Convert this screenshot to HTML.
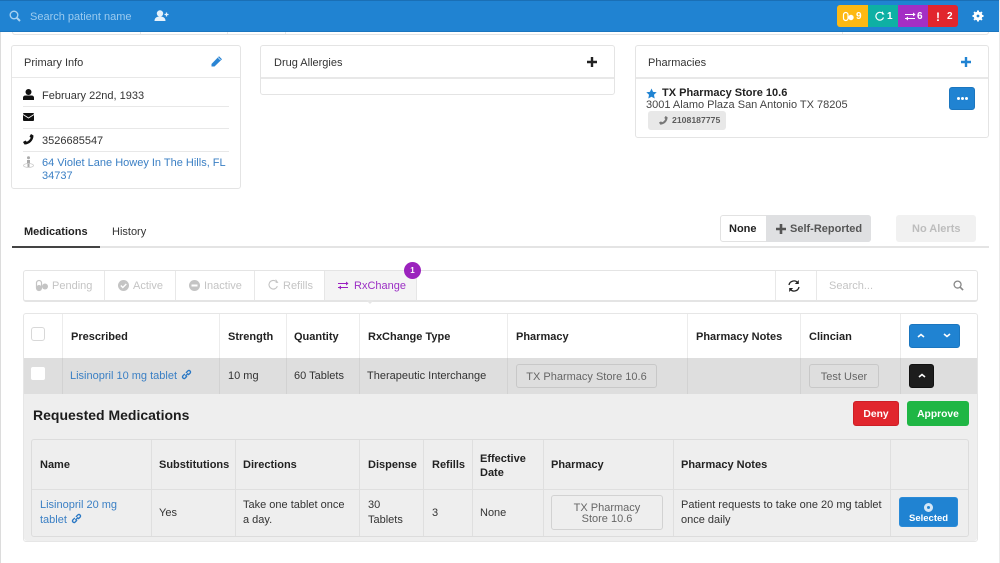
<!DOCTYPE html>
<html><head><meta charset="utf-8">
<style>
*{box-sizing:border-box}
html,body{margin:0;padding:0;width:1000px;height:563px;overflow:hidden;background:#fff;font-family:"Liberation Sans",sans-serif;font-size:11px;color:#333}
.a{position:absolute;white-space:nowrap;margin-top:1px}
.b{position:absolute}
.card{position:absolute;border:1px solid #e4e4e4;border-radius:3px;background:#fff}
.line{position:absolute;background:#e8e8e8}
.th{position:absolute;font-weight:bold;color:#222;white-space:nowrap;font-size:11px;margin-top:1px}
.link{color:#3a7fc4}
svg{position:absolute;overflow:visible}
.btn{position:absolute;border-radius:3px;text-align:center;white-space:nowrap}
.tabt{position:absolute;color:#c4c4c4;font-size:11px;white-space:nowrap;margin-top:1px}
.dg{font-size:10px!important}
</style></head><body>

<div class="b" style="left:0;top:0;width:1px;height:563px;background:#dcdcdc"></div>
<div class="b" style="left:999px;top:0;width:1px;height:563px;background:#eaeaea;z-index:5"></div>

<!-- remnant card top -->
<div class="b" style="left:12px;top:31px;width:977px;height:4px;border:1px solid #e4e4e4;border-top:0;border-radius:0 0 3px 3px"></div>
<div class="line" style="left:140px;top:31px;width:1px;height:3px"></div>
<div class="line" style="left:227px;top:31px;width:1px;height:3px"></div>
<div class="line" style="left:285px;top:31px;width:1px;height:3px"></div>
<div class="line" style="left:842px;top:31px;width:1px;height:3px"></div>

<!-- top bar -->
<div class="b" style="left:0;top:0;width:1000px;height:32px;background:#2083d2;border-top:1px solid #1a6fb5;border-bottom:1px solid #1b76bf"></div>
<svg style="left:9px;top:10px" width="12" height="12" viewBox="0 0 12 12"><circle cx="5" cy="5" r="3.8" fill="none" stroke="#a9d2f1" stroke-width="1.400"/><path d="M7.800 7.800L11 11" stroke="#a9d2f1" stroke-width="2"/></svg>
<div class="a" style="left:30px;top:10px;color:#9ccbef;font-size:11px">Search patient name</div>
<svg style="left:154px;top:10px" width="15" height="12" viewBox="0 0 15 12"><circle cx="6" cy="3.500" r="3.200" fill="#e6f2fb"/><path d="M0.500 11c0-3 2-4.500 5.500-4.500s5.500 1.500 5.500 4.500z" fill="#e6f2fb"/><path d="M12.500 2.500v4M10.500 4.500h4" stroke="#e6f2fb" stroke-width="1.300"/></svg>

<!-- badges -->
<div class="b" style="left:837px;top:5px;width:31px;height:22px;background:#fdb913;border-radius:3px 0 0 3px"></div>
<div class="b" style="left:868px;top:5px;width:30px;height:22px;background:#0eb0a4"></div>
<div class="b" style="left:898px;top:5px;width:30px;height:22px;background:#a42fc4"></div>
<div class="b" style="left:928px;top:5px;width:30px;height:22px;background:#e1262d;border-radius:0 3px 3px 0"></div>
<svg style="left:843px;top:12px" width="11" height="9" viewBox="0 0 11 9"><rect x="0.500" y="0.500" width="4.500" height="8" rx="2.200" fill="none" stroke="#fff" stroke-width="1.200"/><circle cx="8" cy="5.500" r="2.700" fill="#fff"/></svg>
<div class="a dg" style="left:856px;top:10px;color:#fff;font-weight:bold">9</div>
<svg style="left:875px;top:11px" width="10" height="10" viewBox="0 0 10 10"><path d="M8.500 6.500A3.900 3.900 0 1 1 7 2" fill="none" stroke="#fff" stroke-width="1.200"/><path d="M7 0v3.500H9.500z" fill="#fff"/></svg>
<div class="a dg" style="left:887px;top:10px;color:#fff;font-weight:bold">1</div>
<svg style="left:905px;top:12px" width="11" height="9" viewBox="0 0 11 9"><path d="M0 2.500h9M0 6.500h10" stroke="#fff" stroke-width="1.100"/><path d="M8 0.500l2.500 2-2.500 2zM3 4.500l-2.500 2 2.500 2z" fill="#fff"/></svg>
<div class="a dg" style="left:917px;top:10px;color:#fff;font-weight:bold">6</div>
<div class="a" style="left:936px;top:9px;color:#fff;font-weight:bold;font-size:12px">!</div>
<div class="a dg" style="left:947px;top:10px;color:#fff;font-weight:bold">2</div>
<svg style="left:972px;top:10px" width="12" height="12" viewBox="0 0 12 12"><circle cx="6" cy="6" r="2.900" fill="none" stroke="#fff" stroke-width="3"/><path d="M6 .5v2.500M6 9v2.500M.5 6H3M9 6h2.500M2.100 2.100l1.800 1.800M8.100 8.100l1.800 1.800M9.900 2.100L8.100 3.900M3.900 8.100L2.100 9.900" stroke="#fff" stroke-width="2"/></svg>

<!-- Primary Info -->
<div class="card" style="left:11px;top:45px;width:230px;height:144px"></div>
<div class="line" style="left:12px;top:77px;width:228px;height:1px"></div>
<div class="a" style="left:24px;top:56px;font-size:11px;color:#333">Primary Info</div>
<svg style="left:211px;top:55px" width="12" height="12" viewBox="0 0 12 12"><path d="M.5 9L8 1.300 11 4.200 3.500 11.500H.5z" fill="#2a85d4"/><path d="M7 2.500l2.500 2.500" stroke="#fff" stroke-width=".6"/></svg>
<svg style="left:23px;top:89px" width="11" height="11" viewBox="0 0 11 11"><circle cx="5.500" cy="3" r="3" fill="#111"/><path d="M0 11V8.500C0 7.500 1 6.500 2.500 6.500h6c1.500 0 2.500 1 2.500 2V11z" fill="#111"/></svg>
<div class="a" style="left:42px;top:89px;font-size:11px;color:#333">February 22nd, 1933</div>
<div class="line" style="left:23px;top:106px;width:206px;height:1px"></div>
<svg style="left:23px;top:113px" width="11" height="8" viewBox="0 0 11 8"><rect width="11" height="8" rx="1" fill="#111"/><path d="M0 1.500L5.500 5 11 1.500" fill="none" stroke="#fff" stroke-width=".9"/></svg>
<div class="line" style="left:23px;top:128px;width:206px;height:1px"></div>
<svg style="left:23px;top:134px" width="11" height="11" viewBox="0 0 11 11"><path d="M10.500 1.500c0 5-4 9-9 9L0 8l2.500-1.500 1.200 1.200C5.500 7 7 5.500 7.700 3.700L6.500 2.500 8 0z" fill="#111"/></svg>
<div class="a" style="left:42px;top:134px;font-size:11px;color:#333">3526685547</div>
<div class="line" style="left:23px;top:151px;width:206px;height:1px"></div>
<svg style="left:23px;top:156px" width="11" height="12" viewBox="0 0 11 12"><circle cx="5.500" cy="1.800" r="1.500" fill="#aaa"/><path d="M4 4h3v4H6.500v3h-2V8H4z" fill="#aaa"/><ellipse cx="5.500" cy="9.500" rx="5" ry="2" fill="none" stroke="#ccc" stroke-width=".8"/></svg>
<div class="a link" style="left:42px;top:156px;font-size:11px;line-height:13px;white-space:normal;width:190px">64 Violet Lane Howey In The Hills, FL 34737</div>

<!-- Drug Allergies -->
<div class="card" style="left:260px;top:45px;width:355px;height:50px"></div>
<div class="line" style="left:261px;top:77px;width:353px;height:2px"></div>
<div class="a" style="left:274px;top:56px;font-size:11px;color:#333">Drug Allergies</div>
<svg style="left:587px;top:57px" width="10" height="10" viewBox="0 0 10 10"><path d="M5 0v10M0 5h10" stroke="#222" stroke-width="2.400"/></svg>

<!-- Pharmacies -->
<div class="card" style="left:635px;top:45px;width:354px;height:93px"></div>
<div class="line" style="left:636px;top:77px;width:352px;height:2px"></div>
<div class="a" style="left:648px;top:56px;font-size:11px;color:#333">Pharmacies</div>
<svg style="left:961px;top:57px" width="10" height="10" viewBox="0 0 10 10"><path d="M5 0v10M0 5h10" stroke="#2083d2" stroke-width="2.400"/></svg>
<svg style="left:646px;top:88px" width="11" height="11" viewBox="0 0 12 12"><path d="M6 .5l1.700 3.700 4 .5-3 2.700.8 4L6 9.500l-3.500 1.900.8-4-3-2.700 4-.5z" fill="#2083d2"/></svg>
<div class="a" style="left:662px;top:86px;font-size:11px;font-weight:bold;color:#222">TX Pharmacy Store 10.6</div>
<div class="a" style="left:646px;top:98px;font-size:11px;color:#444">3001 Alamo Plaza San Antonio TX 78205</div>
<div class="b" style="left:648px;top:111px;width:78px;height:19px;background:#e8e8e8;border-radius:3px"></div>
<svg style="left:659px;top:116px" width="9" height="9" viewBox="0 0 11 11"><path d="M10.500 1.500c0 5-4 9-9 9L0 8l2.500-1.500 1.200 1.200C5.500 7 7 5.500 7.700 3.700L6.500 2.500 8 0z" fill="#777"/></svg>
<div class="a" style="left:672px;top:114px;font-size:8.700px;color:#444;font-weight:bold;opacity:.85">2108187775</div>
<div class="btn" style="left:949px;top:87px;width:26px;height:23px;background:#2083d2;border:1px solid #1b76bf"></div>
<div class="b" style="left:957px;top:97px;width:3px;height:3px;background:#fff;border-radius:50%;box-shadow:4px 0 0 #fff,8px 0 0 #fff"></div>

<!-- Tabs -->
<div class="a" style="left:24px;top:225px;font-size:11px;font-weight:bold;color:#222">Medications</div>
<div class="a" style="left:112px;top:225px;font-size:11px;color:#333">History</div>
<div class="line" style="left:12px;top:246px;width:977px;height:2px;background:#e4e4e4"></div>
<div class="b" style="left:12px;top:246px;width:88px;height:2px;background:#444"></div>

<div class="b" style="left:720px;top:215px;width:151px;height:27px;border:1px solid #e2e2e2;border-radius:3px;background:#fff"></div>
<div class="b" style="left:766px;top:215px;width:105px;height:27px;background:#dfe0e2;border-radius:0 3px 3px 0"></div>
<div class="a" style="left:729px;top:222px;font-size:11px;font-weight:bold;color:#222">None</div>
<svg style="left:776px;top:224px" width="10" height="10" viewBox="0 0 10 10"><path d="M5 0v10M0 5h10" stroke="#555" stroke-width="2.600"/></svg>
<div class="a" style="left:790px;top:222px;font-size:11px;font-weight:bold;color:#555">Self-Reported</div>
<div class="b" style="left:896px;top:215px;width:80px;height:27px;background:#f1f1f1;border-radius:3px"></div>
<div class="a" style="left:912px;top:222px;font-size:11px;font-weight:bold;color:#bdbdbd">No Alerts</div>

<!-- Filter bar -->
<div class="card" style="left:23px;top:270px;width:955px;height:32px;border:1px solid #e4e4e4;border-bottom-width:2px"></div>
<div class="line" style="left:104px;top:271px;width:1px;height:29px"></div>
<div class="line" style="left:175px;top:271px;width:1px;height:29px"></div>
<div class="line" style="left:254px;top:271px;width:1px;height:29px"></div>
<div class="b" style="left:324px;top:271px;width:93px;height:29px;background:#f4f4f4;border-left:1px solid #e6e6e6;border-right:1px solid #e6e6e6"></div>
<div class="b" style="left:366px;top:300px;width:0;height:0;border:4px solid transparent;border-top:4px solid #e6e6e6"></div>
<div class="line" style="left:775px;top:271px;width:1px;height:29px"></div>
<div class="line" style="left:816px;top:271px;width:1px;height:29px"></div>

<svg style="left:36px;top:280px" width="12" height="11" viewBox="0 0 12 11"><rect x="0.500" y="0.500" width="5" height="10" rx="2.500" fill="none" stroke="#c4c4c4" stroke-width="1.200"/><rect x="0.500" y="5" width="5" height="5.500" rx="2.500" fill="#c4c4c4"/><circle cx="9" cy="6.500" r="3" fill="#c4c4c4"/></svg>
<div class="tabt" style="left:52px;top:279px">Pending</div>
<svg style="left:118px;top:280px" width="11" height="11" viewBox="0 0 11 11"><circle cx="5.500" cy="5.500" r="5.500" fill="#c4c4c4"/><path d="M2.800 5.500l2 2 3.500-3.500" fill="none" stroke="#fff" stroke-width="1.400"/></svg>
<div class="tabt" style="left:133px;top:279px">Active</div>
<svg style="left:189px;top:280px" width="11" height="11" viewBox="0 0 11 11"><circle cx="5.500" cy="5.500" r="5.500" fill="#c4c4c4"/><rect x="2.500" y="4.500" width="6" height="2" fill="#fff"/></svg>
<div class="tabt" style="left:204px;top:279px">Inactive</div>
<svg style="left:268px;top:279px" width="11" height="11" viewBox="0 0 10 10"><path d="M8.500 6.500A3.900 3.900 0 1 1 7 2" fill="none" stroke="#c4c4c4" stroke-width="1"/><path d="M7 0v3.500H9.500z" fill="#c4c4c4"/></svg>
<div class="tabt" style="left:283px;top:279px">Refills</div>
<svg style="left:338px;top:281px" width="11" height="9" viewBox="0 0 11 9"><path d="M0 2.500h9M0 6.500h10" stroke="#9b1fc0" stroke-width="1"/><path d="M8 0.500l2.500 2-2.500 2zM3 4.500l-2.500 2 2.500 2z" fill="#9b1fc0"/></svg>
<div class="a" style="left:354px;top:279px;font-size:11px;color:#9b2fc4">RxChange</div>
<div class="b" style="left:404px;top:262px;width:17px;height:17px;border-radius:50%;background:#9b23bd;color:#fff;font-size:8px;font-weight:bold;text-align:center;line-height:17px">1</div>
<svg style="left:788px;top:280px" width="12" height="12" viewBox="0 0 12 12"><path d="M1 5a5 5 0 0 1 8.800-2.200M11 7a5 5 0 0 1-8.800 2.200" fill="none" stroke="#222" stroke-width="1.300"/><path d="M10.800 0v4h-4zM1.200 12V8h4z" fill="#222"/></svg>
<div class="a" style="left:829px;top:279px;font-size:11px;color:#c4c4c4">Search...</div>
<svg style="left:953px;top:280px" width="11" height="11" viewBox="0 0 12 12"><circle cx="5" cy="5" r="3.800" fill="none" stroke="#888" stroke-width="1.400"/><path d="M7.800 7.800L11 11" stroke="#888" stroke-width="1.800"/></svg>

<!-- Main table -->
<div class="card" style="left:23px;top:313px;width:955px;height:229px;border-color:#e6e6e6"></div>
<div class="b" style="left:24px;top:358px;width:953px;height:36px;background:#dedede"></div>
<div class="b" style="left:24px;top:394px;width:953px;height:147px;background:#eeeeee;border-radius:0 0 3px 3px"></div>

<div class="line" style="left:62px;top:314px;width:1px;height:44px;background:#ececec"></div>
<div class="line" style="left:219px;top:314px;width:1px;height:44px;background:#ececec"></div>
<div class="line" style="left:286px;top:314px;width:1px;height:44px;background:#ececec"></div>
<div class="line" style="left:359px;top:314px;width:1px;height:44px;background:#ececec"></div>
<div class="line" style="left:507px;top:314px;width:1px;height:44px;background:#ececec"></div>
<div class="line" style="left:687px;top:314px;width:1px;height:44px;background:#ececec"></div>
<div class="line" style="left:800px;top:314px;width:1px;height:44px;background:#ececec"></div>
<div class="line" style="left:900px;top:314px;width:1px;height:44px;background:#ececec"></div>
<div class="line" style="left:62px;top:358px;width:1px;height:36px;background:#d2d2d2"></div>
<div class="line" style="left:219px;top:358px;width:1px;height:36px;background:#d2d2d2"></div>
<div class="line" style="left:286px;top:358px;width:1px;height:36px;background:#d2d2d2"></div>
<div class="line" style="left:359px;top:358px;width:1px;height:36px;background:#d2d2d2"></div>
<div class="line" style="left:507px;top:358px;width:1px;height:36px;background:#d2d2d2"></div>
<div class="line" style="left:687px;top:358px;width:1px;height:36px;background:#d2d2d2"></div>
<div class="line" style="left:800px;top:358px;width:1px;height:36px;background:#d2d2d2"></div>
<div class="line" style="left:900px;top:358px;width:1px;height:36px;background:#d2d2d2"></div>

<div class="b" style="left:31px;top:327px;width:14px;height:14px;border:1px solid #d8d8d8;border-radius:3px;background:#fff"></div>
<div class="th" style="left:71px;top:330px">Prescribed</div>
<div class="th" style="left:228px;top:330px">Strength</div>
<div class="th" style="left:294px;top:330px">Quantity</div>
<div class="th" style="left:368px;top:330px">RxChange Type</div>
<div class="th" style="left:516px;top:330px">Pharmacy</div>
<div class="th" style="left:696px;top:330px">Pharmacy Notes</div>
<div class="th" style="left:809px;top:330px">Clincian</div>
<div class="btn" style="left:909px;top:324px;width:51px;height:24px;background:#2083d2;border:1px solid #1b76bf"></div>
<svg style="left:917px;top:333px" width="8" height="5" viewBox="0 0 8 5"><path d="M1 4l3-2.500L7 4" fill="none" stroke="#fff" stroke-width="1.600"/></svg>
<svg style="left:943px;top:333px" width="8" height="5" viewBox="0 0 8 5"><path d="M1 1l3 2.500L7 1" fill="none" stroke="#fff" stroke-width="1.600"/></svg>

<div class="b" style="left:31px;top:367px;width:14px;height:13px;background:#fff;border-radius:2px"></div>
<div class="a link" style="left:70px;top:369px;font-size:11px">Lisinopril 10 mg tablet</div>
<svg style="left:181px;top:369px" width="11" height="11" viewBox="0 0 10 10"><path d="M4 6.500L6.500 4M3.500 4.500L1.500 6.500a1.500 1.500 0 0 0 2 2L5.500 6.500M4.500 3.500l2-2a1.500 1.500 0 0 1 2 2L6.500 5.500" fill="none" stroke="#2a78c4" stroke-width="1.200"/></svg>
<div class="a" style="left:228px;top:369px;font-size:11px;color:#333">10 mg</div>
<div class="a" style="left:294px;top:369px;font-size:11px;color:#333">60 Tablets</div>
<div class="a" style="left:367px;top:369px;font-size:11px;color:#333">Therapeutic Interchange</div>
<div class="btn" style="left:516px;top:364px;width:141px;height:24px;border:1px solid #c8c8c8;line-height:24px;color:#666;font-size:11px">TX Pharmacy Store 10.6</div>
<div class="btn" style="left:809px;top:364px;width:70px;height:24px;border:1px solid #c8c8c8;line-height:24px;color:#666;font-size:11px">Test User</div>
<div class="btn" style="left:909px;top:364px;width:25px;height:24px;background:#1d1d1d;border:1px solid #111"></div>
<svg style="left:918px;top:373px" width="8" height="5" viewBox="0 0 8 5"><path d="M1 4l3-2.500L7 4" fill="none" stroke="#fff" stroke-width="1.600"/></svg>

<!-- Requested -->
<div class="a" style="left:33px;top:406px;font-size:14px;font-weight:bold;color:#1c1c1c">Requested Medications</div>
<div class="btn" style="left:853px;top:401px;width:46px;height:25px;background:#e1262d;border:1px solid #cc1f26;color:#fff;font-weight:bold;font-size:10.300px;line-height:25px">Deny</div>
<div class="btn" style="left:907px;top:401px;width:62px;height:25px;background:#1fb644;color:#fff;font-weight:bold;font-size:10.300px;line-height:27px">Approve</div>

<div class="b" style="left:31px;top:439px;width:938px;height:98px;border:1px solid #dcdcdc;border-radius:3px"></div>
<div class="line" style="left:32px;top:489px;width:936px;height:1px;background:#dfdfdf"></div>
<div class="line" style="left:151px;top:440px;width:1px;height:96px;background:#dfdfdf"></div>
<div class="line" style="left:235px;top:440px;width:1px;height:96px;background:#dfdfdf"></div>
<div class="line" style="left:359px;top:440px;width:1px;height:96px;background:#dfdfdf"></div>
<div class="line" style="left:423px;top:440px;width:1px;height:96px;background:#dfdfdf"></div>
<div class="line" style="left:472px;top:440px;width:1px;height:96px;background:#dfdfdf"></div>
<div class="line" style="left:543px;top:440px;width:1px;height:96px;background:#dfdfdf"></div>
<div class="line" style="left:673px;top:440px;width:1px;height:96px;background:#dfdfdf"></div>
<div class="line" style="left:890px;top:440px;width:1px;height:96px;background:#dfdfdf"></div>

<div class="th" style="left:40px;top:458px">Name</div>
<div class="th" style="left:159px;top:458px">Substitutions</div>
<div class="th" style="left:243px;top:458px">Directions</div>
<div class="th" style="left:368px;top:458px">Dispense</div>
<div class="th" style="left:432px;top:458px">Refills</div>
<div class="th" style="left:480px;top:451px;line-height:14px">Effective<br>Date</div>
<div class="th" style="left:551px;top:458px">Pharmacy</div>
<div class="th" style="left:681px;top:458px">Pharmacy Notes</div>

<div class="a link" style="left:40px;top:497px;font-size:11px;line-height:15px">Lisinopril 20 mg<br>tablet</div>
<svg style="left:71px;top:513px" width="11" height="11" viewBox="0 0 10 10"><path d="M4 6.500L6.500 4M3.500 4.500L1.500 6.500a1.500 1.500 0 0 0 2 2L5.500 6.500M4.500 3.500l2-2a1.500 1.500 0 0 1 2 2L6.500 5.500" fill="none" stroke="#2a78c4" stroke-width="1.200"/></svg>
<div class="a" style="left:159px;top:506px;font-size:11px;color:#333">Yes</div>
<div class="a" style="left:243px;top:497px;font-size:11px;line-height:15px;color:#333">Take one tablet once<br>a day.</div>
<div class="a" style="left:368px;top:497px;font-size:11px;line-height:15px;color:#333">30<br>Tablets</div>
<div class="a" style="left:432px;top:506px;font-size:11px;color:#333">3</div>
<div class="a" style="left:480px;top:506px;font-size:11px;color:#333">None</div>
<div class="btn" style="left:551px;top:495px;width:112px;height:35px;border:1px solid #d2d2d2;color:#666;font-size:11px;line-height:11px;padding-top:7px">TX Pharmacy<br>Store 10.6</div>
<div class="a" style="left:681px;top:497px;font-size:11px;line-height:15px;color:#333">Patient requests to take one 20 mg tablet<br>once daily</div>
<div class="btn" style="left:899px;top:497px;width:59px;height:30px;background:#2083d2;border:1px solid #2a8bd8"></div>
<div class="b" style="left:924px;top:503px;width:9px;height:9px;border-radius:50%;background:#d3e7f7;border:2.500px solid #d3e7f7"></div>
<div class="b" style="left:927px;top:506px;width:3px;height:3px;border-radius:50%;background:#2083d2"></div>
<div class="a" style="left:909px;top:512px;color:#fff;font-weight:bold;font-size:9.500px">Selected</div>

</body></html>
